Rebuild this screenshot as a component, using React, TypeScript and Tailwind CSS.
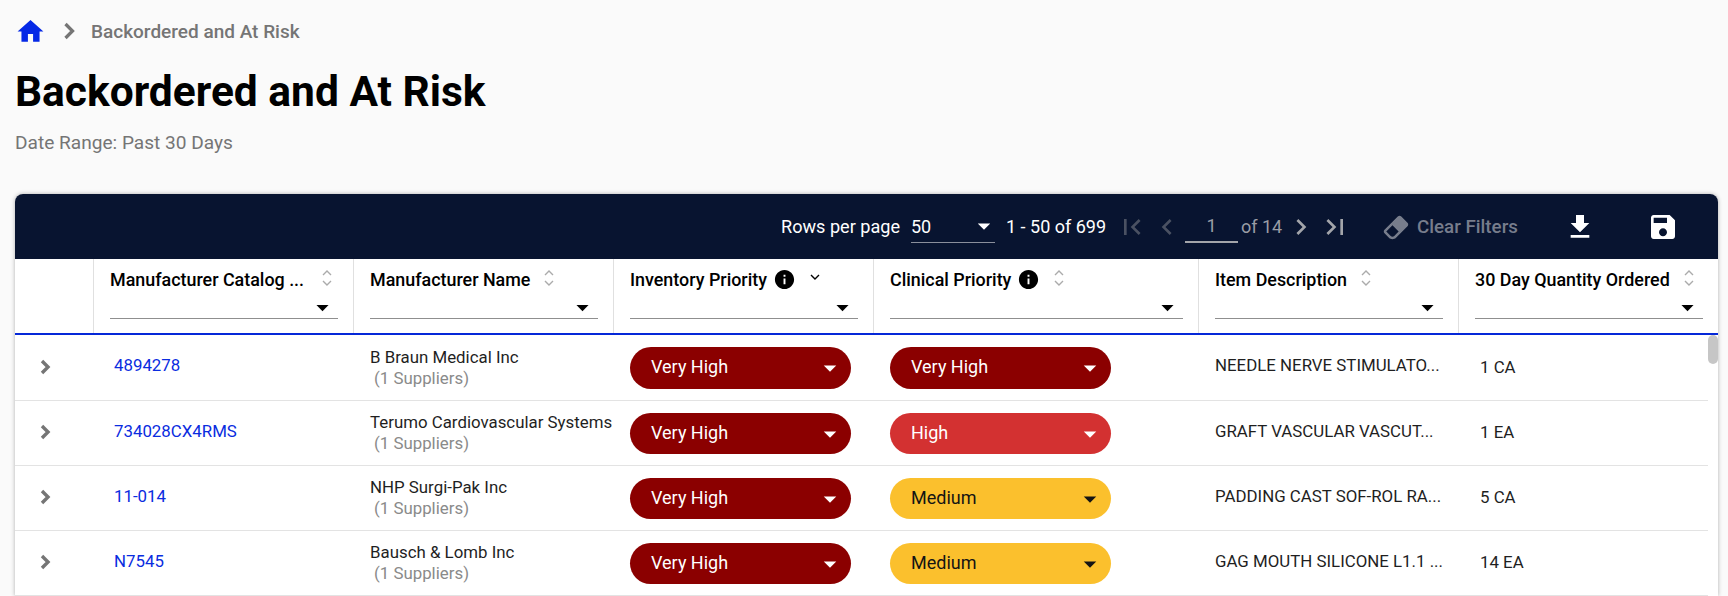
import React from "react";

const F = "font-['Roboto',sans-serif]";

function Caret({ className = "" }: { className?: string }) {
  return (
    <svg viewBox="0 0 24 24" className={className} fill="currentColor">
      <path d="M7 10l5 5 5-5z" />
    </svg>
  );
}

function SortIcon() {
  return (
    <svg viewBox="0 0 10 20" className="w-[10px] h-[20px] shrink-0 text-[#ababab]" fill="none" stroke="currentColor" strokeWidth="1.4">
      <path d="M1 7 5 3l4 4" />
      <path d="M1 13l4 4 4-4" />
    </svg>
  );
}

function Info() {
  return (
    <svg viewBox="0 0 24 24" className="w-[23px] h-[23px] shrink-0 text-black" fill="currentColor">
      <path d="M12 2C6.48 2 2 6.48 2 12s4.48 10 10 10 10-4.48 10-10S17.52 2 12 2zm1 15h-2v-6h2v6zm0-8h-2V7h2v2z" />
    </svg>
  );
}

function Header({
  title,
  info,
  sort = "both",
  gap = "ml-[14px]",
  w,
}: {
  title: string;
  info?: boolean;
  sort?: string;
  gap?: string;
  w: string;
}) {
  return (
    <div className={`${w} h-full border-r border-[#e0e0e0] last:border-r-0 pl-[16px] pr-[15px] flex flex-col`}>
      <div className="flex items-start h-[36px] pt-[8px]">
        <span className="text-[17.9px] leading-[22px] pt-[2px] font-medium text-black whitespace-nowrap">{title}</span>
        {info && (
          <span className="ml-[6px] mt-[1px]">
            <Info />
          </span>
        )}
        <span className={`${gap} mt-[1px]`}>
          {sort === "both" ? (
            <SortIcon />
          ) : (
            <svg viewBox="0 0 10 20" className="w-[10px] h-[20px] text-black" fill="none" stroke="currentColor" strokeWidth="1.4">
              <path d="M1 7l4 4 4-4" />
            </svg>
          )}
        </span>
      </div>
      <div className="h-[24px] pt-[2px] border-b border-[#8f8f8f] flex items-center justify-end">
        <Caret className="w-[29px] h-[29px] mr-[1px] text-black" />
      </div>
    </div>
  );
}

function Pill({ label, tone, h }: { label: string; tone: "vh" | "h" | "m"; h: string }) {
  const cls =
    tone === "vh"
      ? "bg-[#8b0000] text-white"
      : tone === "h"
      ? "bg-[#d33131] text-white"
      : "bg-[#fbc02d] text-[#141414]";
  return (
    <div className={`w-[221px] ${h} rounded-full ${cls} flex items-center justify-between pl-[21px] pr-[6px]`}>
      <span className="text-[18px] leading-[20px] -mt-[1px]">{label}</span>
      <Caret className="w-[30px] h-[30px]" />
    </div>
  );
}

const rows: {
  id: string;
  name: string;
  inv: [string, "vh" | "h" | "m"];
  clin: [string, "vh" | "h" | "m"];
  desc: string;
  qty: string;
  h: string;
  p: string;
}[] = [
  { id: "4894278", name: "B Braun Medical Inc", inv: ["Very High", "vh"], clin: ["Very High", "vh"], desc: "NEEDLE NERVE STIMULATO...", qty: "1 CA", h: "h-[66px]", p: "h-[42px]" },
  { id: "734028CX4RMS", name: "Terumo Cardiovascular Systems", inv: ["Very High", "vh"], clin: ["High", "h"], desc: "GRAFT VASCULAR VASCUT...", qty: "1 EA", h: "h-[65px]", p: "h-[41px] mt-[1px]" },
  { id: "11-014", name: "NHP Surgi-Pak Inc", inv: ["Very High", "vh"], clin: ["Medium", "m"], desc: "PADDING CAST SOF-ROL RA...", qty: "5 CA", h: "h-[65px]", p: "h-[41px] mt-[1px]" },
  { id: "N7545", name: "Bausch & Lomb Inc", inv: ["Very High", "vh"], clin: ["Medium", "m"], desc: "GAG MOUTH SILICONE L1.1 ...", qty: "14 EA", h: "h-[65px]", p: "h-[41px] mt-[1px]" },
];

const navIcon = "w-[32px] h-[32px] shrink-0";

export default function App() {
  return (
    <div className={`${F} h-[596px] overflow-hidden bg-[#fafafa] pl-[15px] pr-[10px]`}>
      <div className="h-[62px] flex items-center">
        <svg viewBox="0 0 24 24" className="w-[31px] h-[31px] text-[#0528e6]" fill="currentColor">
          <path d="M10 20v-6h4v6h5v-8h3L12 3 2 12h3v8z" />
        </svg>
        <svg viewBox="0 0 24 24" className="w-[28px] h-[28px] text-[#757575] ml-[9px]" fill="none" stroke="currentColor" strokeWidth="2.8">
          <path d="M9 6l6 6-6 6" />
        </svg>
        <span className="ml-[8px] pt-[2px] text-[19px] font-medium text-[#757575]">Backordered and At Risk</span>
      </div>
      <h1 className="text-[42.5px] leading-[50px] font-bold text-black mt-[5px]">Backordered and At Risk</h1>
      <div className="mt-[14px] text-[19.1px] leading-[24px] text-[#757575]">Date Range: Past 30 Days</div>
      <div className="mt-[39px] rounded-t-[8px] shadow-[0_0_4px_rgba(0,0,0,0.3)] bg-white overflow-hidden">
        <div className="h-[65px] bg-[#081430] flex items-center text-white whitespace-nowrap">
          <span className="ml-[766px] text-[18.1px] w-[119px]">Rows per page</span>
          <div className="ml-[11px] w-[84px] h-[33px] border-b border-[#8a8f9c] flex items-center justify-between">
            <span className="text-[18px]">50</span>
            <Caret className="w-[30px] h-[30px] -mr-[4px]" />
          </div>
          <span className="ml-[11px] text-[18px] w-[100px]">1 - 50 of 699</span>
          <svg viewBox="0 0 24 24" className={`${navIcon} ml-[10px] text-[#4a5162]`} fill="currentColor">
            <path d="M18.41 16.59L13.82 12l4.59-4.59L17 6l-6 6 6 6zM6 6h2v12H6z" />
          </svg>
          <svg viewBox="0 0 24 24" className={`${navIcon} ml-[3px] text-[#4a5162]`} fill="currentColor">
            <path d="M15.41 7.41L14 6l-6 6 6 6 1.41-1.41L10.83 12z" />
          </svg>
          <div className="ml-[2px] w-[53px] h-[33px] border-b-2 border-[#a3a5aa] flex items-center justify-center text-[18px] text-[#9a9da5]">1</div>
          <span className="ml-[3px] w-[41px] text-[18px] text-[#9a9da5]">of 14</span>
          <svg viewBox="0 0 24 24" className={`${navIcon} ml-[3px] text-[#a3a5aa]`} fill="currentColor">
            <path d="M10 6L8.59 7.41 13.17 12l-4.58 4.59L10 18l6-6z" />
          </svg>
          <svg viewBox="0 0 24 24" className={`${navIcon} ml-[2px] text-[#a3a5aa]`} fill="currentColor">
            <path d="M5.59 7.41L10.18 12l-4.59 4.59L7 18l6-6-6-6zM16 6h2v12h-2z" />
          </svg>
          <svg viewBox="0 0 24 24" className="w-[30px] h-[30px] ml-[30px] shrink-0 text-[#777d8c]" fill="currentColor">
            <path d="M16.24 3.56L21.19 8.5C21.97 9.29 21.97 10.55 21.19 11.34L12 20.53C10.44 22.09 7.91 22.09 6.34 20.53L2.81 17C2.03 16.21 2.03 14.95 2.81 14.16L13.41 3.56C14.2 2.78 15.46 2.78 16.24 3.56M4.22 15.58L7.76 19.11C8.54 19.9 9.8 19.9 10.59 19.11L14.12 15.58L9.17 10.63L4.22 15.58Z" />
          </svg>
          <span className="ml-[6px] w-[100px] pt-[1px] text-[18.75px] font-medium text-[#777d8c]">Clear Filters</span>
          <svg viewBox="0 0 24 24" className={`${navIcon} ml-[47px]`} fill="currentColor">
            <path d="M19 9h-4V3H9v6H5l7 7 7-7zM5 18v2h14v-2H5z" />
          </svg>
          <svg viewBox="0 0 24 24" className={`${navIcon} ml-[51px]`} fill="currentColor">
            <path d="M17 3H5c-1.11 0-2 .9-2 2v14c0 1.1.89 2 2 2h14c1.1 0 2-.9 2-2V7l-4-4zm-5 16c-1.66 0-3-1.34-3-3s1.34-3 3-3 3 1.34 3 3-1.34 3-3 3zm3-10H5V5h10v4z" />
          </svg>
        </div>
        <div className="flex h-[76px] border-b-2 border-[#0528d8]">
          <div className="w-[79px] h-full border-r border-[#e0e0e0]" />
          <Header w="w-[260px]" title="Manufacturer Catalog ..." gap="ml-[18px]" />
          <Header w="w-[260px]" title="Manufacturer Name" />
          <Header w="w-[260px]" title="Inventory Priority" info sort="down" />
          <Header w="w-[325px]" title="Clinical Priority" info />
          <Header w="w-[260px]" title="Item Description" />
          <Header w="flex-1" title="30 Day Quantity Ordered" />
        </div>
        <div className="relative pr-[10px]">
          {rows.map((r) => (
            <div key={r.id} className={`${r.h} flex items-center border-b border-[#e3e3e3] text-[16.85px] text-[#1f1f1f]`}>
              <div className="w-[79px] flex justify-center pr-[19px] -mt-[2px]">
                <svg viewBox="0 0 24 24" className="w-[24px] h-[24px] text-[#757575]" fill="none" stroke="currentColor" strokeWidth="3.4">
                  <path d="M9 6l6 6-6 6" />
                </svg>
              </div>
              <div className="w-[260px] pl-[20px] text-[#0a2ce0] -mt-[3px]">{r.id}</div>
              <div className="w-[260px] pl-[16px] leading-[21px] whitespace-nowrap">
                <div>{r.name}</div>
                <div className="pl-[4px] text-[#8a8a8a]">(1 Suppliers)</div>
              </div>
              <div className="w-[260px] pl-[16px]">
                <Pill label={r.inv[0]} tone={r.inv[1]} h={r.p} />
              </div>
              <div className="w-[325px] pl-[16px]">
                <Pill label={r.clin[0]} tone={r.clin[1]} h={r.p} />
              </div>
              <div className="w-[260px] pl-[16px] whitespace-nowrap -mt-[3px]">{r.desc}</div>
              <div className="pl-[21px]">{r.qty}</div>
            </div>
          ))}
          <div className="absolute right-0 top-0 w-[10px] h-[29px] rounded-full bg-[#c6c6c6]" />
        </div>
      </div>
    </div>
  );
}
